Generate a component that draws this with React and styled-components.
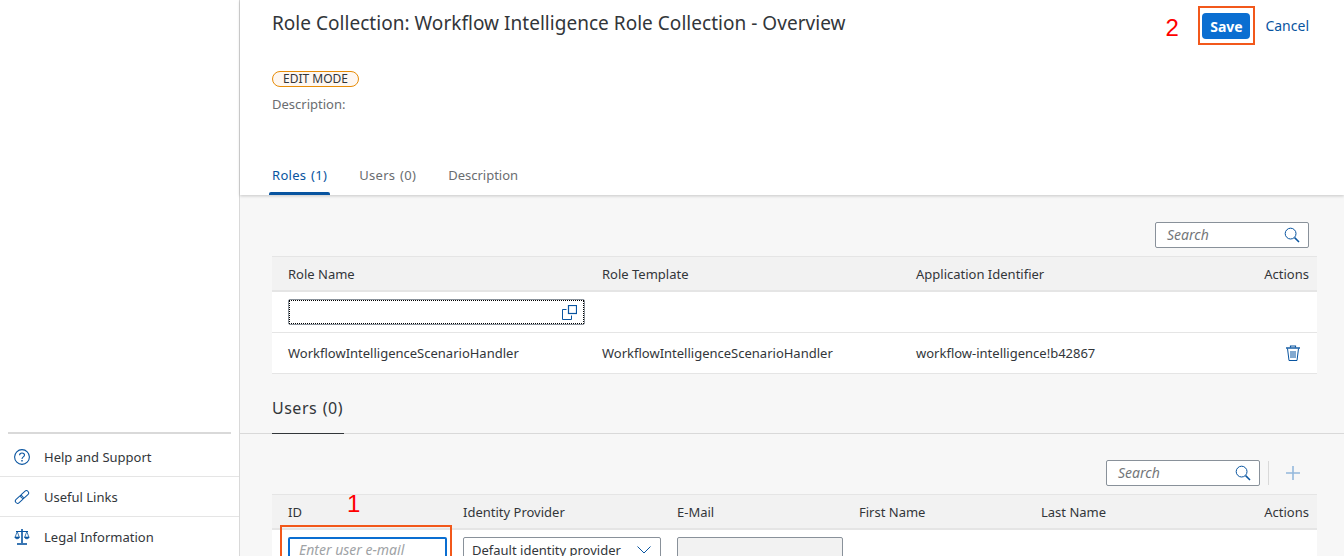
import React from 'react'
import styled, { createGlobalStyle } from 'styled-components'

const FONT = `"Noto Sans", "Open Sans", Arial, sans-serif`

const HelpIcon = () => (
  <svg width="16" height="16" viewBox="0 0 16 16" fill="none" stroke="#0854a0" strokeWidth="1.1">
    <circle cx="8" cy="8" r="7.4" />
    <path d="M5.6 6.3c0-1.4 1-2.3 2.4-2.3s2.5.9 2.5 2.1c0 1.8-2.5 1.8-2.5 3.8" />
    <path d="M8 11v1.5" strokeWidth="1.4" />
  </svg>
)

const LinkIcon = () => (
  <svg width="16" height="16" viewBox="0 0 16 16" fill="none" stroke="#0854a0" strokeWidth="1">
    <rect x="0.8" y="8.2" width="9" height="4.6" rx="2.3" transform="rotate(-42 5.3 10.5)" />
    <rect x="6.2" y="3.2" width="9" height="4.6" rx="2.3" transform="rotate(-42 10.7 5.5)" />
  </svg>
)

const ScaleIcon = () => (
  <svg width="16" height="17" viewBox="0 0 16 17" fill="none" stroke="#0854a0" strokeWidth="1">
    <path d="M8 1v14" strokeWidth="1.6" />
    <path d="M3 16h10" strokeWidth="1.6" />
    <path d="M2 3.5h12" />
    <path d="M3.2 3.5 1.2 9M3.2 3.5l2 5.5M12.8 3.5l-2 5.5M12.8 3.5l2 5.5" strokeWidth="0.8" />
    <path d="M.8 9h4.8c-.2 2.4-4.6 2.4-4.8 0zM10.4 9h4.8c-.2 2.4-4.6 2.4-4.8 0z" fill="#0854a0" strokeWidth="0.6" />
  </svg>
)

const SearchIcon = () => (
  <svg width="16" height="16" viewBox="0 0 16 16" fill="none" stroke="#0854a0">
    <circle cx="6.6" cy="6.6" r="5.4" strokeWidth="1" />
    <path d="m10.6 10.6 4.4 4.4" strokeWidth="1.5" />
  </svg>
)

const CopyIcon = () => (
  <svg width="15" height="15" viewBox="0 0 15 15" fill="none" stroke="#0854a0" strokeWidth="1">
    <path d="M4.5 4.5H.5v10h9v-4" />
    <rect x="6.5" y=".5" width="8" height="8" strokeWidth="1.2" />
  </svg>
)

const TrashIcon = () => (
  <svg width="16" height="17" viewBox="0 0 16 17" fill="none" stroke="#0854a0" strokeWidth="1">
    <path d="M1 3h14" strokeWidth="1.4" />
    <path d="M5.5 2.4V1h5v1.4" strokeWidth="1.2" />
    <path d="M2.5 3.5 4 15.5h8l1.5-12" />
    <path d="M6 6v7M8 6v7M10 6v7" />
  </svg>
)

const PlusIcon = () => (
  <svg width="16" height="16" viewBox="0 0 16 16" stroke="#94b8dc" strokeWidth="1.6">
    <path d="M8 1v14M1 8h14" />
  </svg>
)

const ChevronIcon = () => (
  <svg width="16" height="10" viewBox="0 0 16 10" fill="none" stroke="#0854a0" strokeWidth="1">
    <path d="m1.5 1.5 6.5 6.5 6.5-6.5" />
  </svg>
)

const App = () => (
  <>
    <GlobalStyle />
    <Page>
      <Sidebar>
        <SideList>
          <SideItem><IconSlot><HelpIcon /></IconSlot>Help and Support</SideItem>
          <SideItem><IconSlot><LinkIcon /></IconSlot>Useful Links</SideItem>
          <SideItem><IconSlot><ScaleIcon /></IconSlot>Legal Information</SideItem>
        </SideList>
      </Sidebar>
      <Main>
        <Header>
          <TitleRow>
            <Title>Role Collection: Workflow Intelligence Role Collection - Overview</Title>
            <HeaderActions>
              <StepNumber $top="6px" $left="-37px">2</StepNumber>
              <SaveButton>Save</SaveButton>
              <CancelLink>Cancel</CancelLink>
            </HeaderActions>
          </TitleRow>
          <Badge>EDIT MODE</Badge>
          <DescriptionLabel>Description:</DescriptionLabel>
          <Tabs>
            <Tab $active $counted>Roles (1)</Tab>
            <Tab $counted>Users (0)</Tab>
            <Tab>Description</Tab>
          </Tabs>
        </Header>
        <Content>
          <Toolbar>
            <SearchBox><span>Search</span><SearchIcon /></SearchBox>
          </Toolbar>
          <RolesRow $head>
            <HeadCell>Role Name</HeadCell>
            <HeadCell>Role Template</HeadCell>
            <HeadCell>Application Identifier</HeadCell>
            <HeadCell $right>Actions</HeadCell>
          </RolesRow>
          <RolesRow>
            <Cell><RoleInput><CopyIcon /></RoleInput></Cell>
          </RolesRow>
          <RolesRow>
            <Cell>WorkflowIntelligenceScenarioHandler</Cell>
            <Cell>WorkflowIntelligenceScenarioHandler</Cell>
            <Cell>workflow-intelligence!b42867</Cell>
            <ActionCell><TrashIcon /></ActionCell>
          </RolesRow>
          <SectionHead>
            <SectionTitle>Users (0)</SectionTitle>
          </SectionHead>
          <UsersToolbar>
            <SearchBox><span>Search</span><SearchIcon /></SearchBox>
            <Separator />
            <AddButton><PlusIcon /></AddButton>
          </UsersToolbar>
          <UsersRow $head>
            <HeadCell>ID</HeadCell>
            <HeadCell>Identity Provider</HeadCell>
            <HeadCell>E-Mail</HeadCell>
            <HeadCell>First Name</HeadCell>
            <HeadCell>Last Name</HeadCell>
            <HeadCell $right>Actions</HeadCell>
          </UsersRow>
          <UsersRow>
            <Cell>
              <IdField>
                <StepNumber $top="-46px" $left="59px">1</StepNumber>
                <IdInput>Enter user e-mail</IdInput>
              </IdField>
            </Cell>
            <Cell><SelectBox>Default identity provider<ChevronIcon /></SelectBox></Cell>
            <Cell><EmailInput /></Cell>
          </UsersRow>
        </Content>
      </Main>
    </Page>
  </>
)

export default App

const GlobalStyle = createGlobalStyle`
  html, body {
    margin: 0;
    height: 100%;
    overflow: hidden;
  }
  body {
    font-family: ${FONT};
    color: #32363a;
  }
`

const Page = styled.div`
  display: flex;
  height: 556px;
  overflow: hidden;
  background: #fff;
`

const Sidebar = styled.aside`
  width: 240px;
  flex: none;
  box-sizing: border-box;
  border-right: 1px solid #d9d9d9;
  display: flex;
  flex-direction: column;
  justify-content: flex-end;
`

const SideList = styled.div`
  position: relative;
  padding-top: 4px;

  &::before {
    content: '';
    position: absolute;
    top: 0;
    left: 8px;
    right: 8px;
    height: 2px;
    background: #d9d9d9;
  }
`

const SideItem = styled.div`
  height: 40px;
  box-sizing: border-box;
  display: flex;
  align-items: center;
  font-size: 13px;
  color: #32363a;

  &:first-child {
    padding-top: 2px;
  }

  & + & {
    border-top: 1px solid #e5e5e5;
  }
`

const IconSlot = styled.span`
  width: 44px;
  padding-left: 14px;
  box-sizing: border-box;
  display: flex;
`

const Main = styled.main`
  flex: 1;
  min-width: 0;
  display: flex;
  flex-direction: column;
  background: #f7f7f7;
`

const Header = styled.header`
  height: 195px;
  flex: none;
  box-sizing: border-box;
  padding: 0 35px 0 32px;
  background: #fff;
  box-shadow: 0 1px 3px rgba(0, 0, 0, 0.2);
  display: flex;
  flex-direction: column;
  align-items: flex-start;
  position: relative;
  z-index: 1;
`

const TitleRow = styled.div`
  width: 100%;
  display: flex;
  justify-content: space-between;
  padding-top: 9px;
  height: 71px;
  box-sizing: border-box;
`

const Title = styled.h1`
  margin: 0;
  font-size: 19px;
  line-height: 28px;
  font-weight: 400;
  letter-spacing: 0.03px;
  color: #32363a;
`

const HeaderActions = styled.div`
  position: relative;
  display: flex;
  align-items: flex-start;
  gap: 15px;
  padding-top: 4px;
`

const SaveButton = styled.button`
  position: relative;
  width: 48px;
  height: 26px;
  padding: 0;
  border: 0;
  border-radius: 4px;
  background: #0a6ed1;
  color: #fff;
  font-family: ${FONT};
  font-size: 14px;
  font-weight: 700;

  &::after {
    content: '';
    position: absolute;
    inset: -7px -5px -6px -4px;
    border: 2px solid #f2581b;
  }
`

const CancelLink = styled.span`
  font-size: 14px;
  line-height: 26px;
  color: #0854a0;
`

const StepNumber = styled.span`
  position: absolute;
  top: ${({ $top }) => $top};
  left: ${({ $left }) => $left};
  font-family: "Liberation Sans", sans-serif;
  font-size: 24px;
  line-height: 26px;
  color: #f00;
`

const Badge = styled.span`
  height: 16px;
  width: 87px;
  box-sizing: border-box;
  border: 1px solid #e78c07;
  border-radius: 8px;
  background: #fef7f1;
  font-size: 12px;
  line-height: 14px;
  text-align: center;
  color: #32363a;
`

const DescriptionLabel = styled.div`
  margin-top: 7px;
  font-size: 13px;
  line-height: 20px;
  color: #6a6d70;
`

const Tabs = styled.nav`
  margin-top: auto;
  display: flex;
  gap: 32px;
`

const Tab = styled.div`
  position: relative;
  height: 40px;
  font-size: 13px;
  line-height: 40px;
  word-spacing: ${({ $counted }) => ($counted ? '1px' : '0')};
  letter-spacing: ${({ $counted }) => ($counted ? '0.3px' : '0')};
  color: ${({ $active }) => ($active ? '#0854a0' : '#6a6d70')};

  &::after {
    content: '';
    display: ${({ $active }) => ($active ? 'block' : 'none')};
    position: absolute;
    left: -3px;
    right: -3px;
    bottom: 0;
    height: 3px;
    border-radius: 2px 2px 0 0;
    background: #0854a0;
  }
`

const Content = styled.section`
  flex: 1;
  min-height: 0;
  overflow: hidden;
`

const Toolbar = styled.div`
  height: 61px;
  box-sizing: border-box;
  margin: 0 27px 0 32px;
  padding: 27px 8px 0 0;
  display: flex;
  justify-content: flex-end;
`

const UsersToolbar = styled(Toolbar)`
  height: 60px;
  align-items: flex-start;
  padding: 26px 43px 0 0;
  margin-right: 0;
`

const SearchBox = styled.div`
  width: 154px;
  height: 26px;
  box-sizing: border-box;
  padding: 0 8px 0 11px;
  background: #fff;
  border: 1px solid #89919a;
  border-radius: 2px;
  display: flex;
  align-items: center;
  justify-content: space-between;
  font-size: 14px;
  font-style: italic;
  color: #74777a;

  span {
    margin-top: -2px;
  }
`

const Separator = styled.div`
  width: 1px;
  height: 24px;
  margin: 1px 16px 0 8px;
  background: #d9d9d9;
`

const AddButton = styled.div`
  display: flex;
  width: 16px;
  height: 26px;
  align-items: center;
`

const RolesRow = styled.div`
  display: grid;
  grid-template-columns: 314px 314px 314px 1fr;
  align-items: center;
  margin: 0 27px 0 32px;
  height: ${({ $head }) => ($head ? '36px' : '41px')};
  box-sizing: border-box;
  padding: 0 8px 0 16px;
  background: ${({ $head }) => ($head ? '#f2f2f2' : '#fff')};
  border-top: ${({ $head }) => ($head ? '1px solid #e5e5e5' : '0')};
  border-bottom: ${({ $head }) => ($head ? '2px solid #e5e5e5' : '1px solid #e5e5e5')};
`

const UsersRow = styled(RolesRow)`
  grid-template-columns: 175px 214px 182px 182px 182px 1fr;
  align-items: ${({ $head }) => ($head ? 'center' : 'start')};
  padding-top: ${({ $head }) => ($head ? '0' : '7px')};
`

const HeadCell = styled.div`
  font-size: 13px;
  color: #32363a;
  text-align: ${({ $right }) => ($right ? 'right' : 'left')};
`

const Cell = styled.div`
  font-size: 13px;
  color: #32363a;
  display: flex;
`

const ActionCell = styled(Cell)`
  justify-content: flex-end;
  padding-right: 8px;
`

const RoleInput = styled.div`
  position: relative;
  width: 297px;
  height: 26px;
  box-sizing: border-box;
  border: 1px solid #89919a;
  border-radius: 2px;
  padding-right: 7px;
  display: flex;
  align-items: center;
  justify-content: flex-end;

  &::before {
    content: '';
    position: absolute;
    inset: 0;
    border: 1px dotted #000;
  }
`

const IdField = styled.div`
  position: relative;
  width: 159px;

  &::after {
    content: '';
    position: absolute;
    top: -12px;
    left: -8px;
    width: 172px;
    height: 40px;
    box-sizing: border-box;
    border: 2px solid #f2581b;
  }
`

const IdInput = styled.div`
  height: 26px;
  box-sizing: border-box;
  padding-left: 9px;
  border: 2px solid #0a6ed1;
  border-radius: 2px;
  font-size: 14px;
  line-height: 22px;
  font-style: italic;
  color: #a0a3a6;
`

const SelectBox = styled.div`
  width: 198px;
  height: 26px;
  box-sizing: border-box;
  padding: 0 8px;
  border: 1px solid #89919a;
  border-radius: 2px;
  display: flex;
  align-items: center;
  justify-content: space-between;
  font-size: 13px;
`

const EmailInput = styled.div`
  width: 166px;
  height: 26px;
  box-sizing: border-box;
  border: 1px solid #89919a;
  border-radius: 2px;
  background: #f2f2f2;
`

const SectionHead = styled.div`
  height: 60px;
  box-sizing: border-box;
  padding: 0 0 0 32px;
  border-bottom: 1px solid #d9d9d9;
  display: flex;
`

const SectionTitle = styled.h2`
  margin: 0;
  width: 72px;
  font-size: 16px;
  font-weight: 400;
  line-height: 68px;
  word-spacing: 1px;
  letter-spacing: 0.5px;
  height: 60px;
  box-sizing: border-box;
  border-bottom: 1px solid #32363a;
  color: #32363a;
  overflow: hidden;
  white-space: nowrap;
`
